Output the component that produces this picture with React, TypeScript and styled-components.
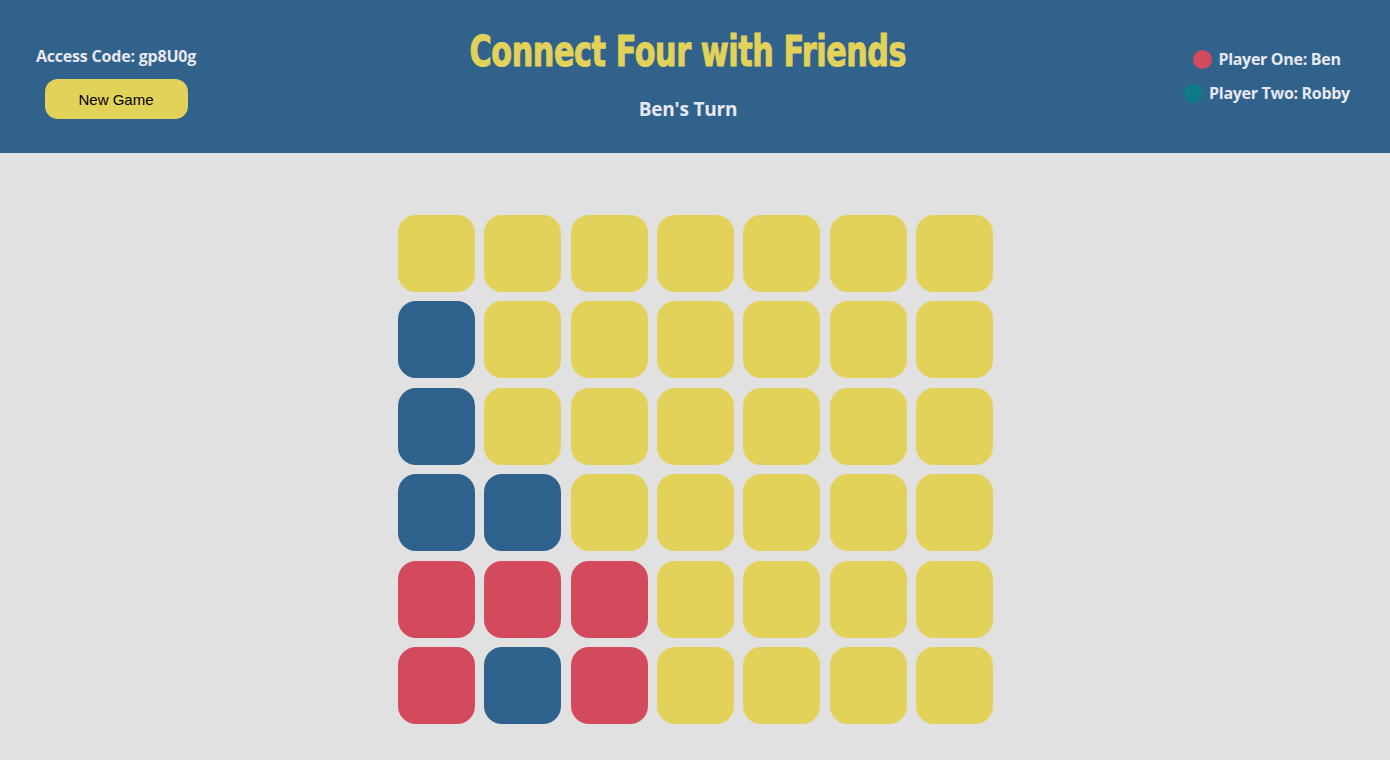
import React from 'react';
import styled, { createGlobalStyle } from 'styled-components';

type Cell = 'Y' | 'B' | 'R';

const board: Cell[][] = [
  ['Y', 'Y', 'Y', 'Y', 'Y', 'Y', 'Y'],
  ['B', 'Y', 'Y', 'Y', 'Y', 'Y', 'Y'],
  ['B', 'Y', 'Y', 'Y', 'Y', 'Y', 'Y'],
  ['B', 'B', 'Y', 'Y', 'Y', 'Y', 'Y'],
  ['R', 'R', 'R', 'Y', 'Y', 'Y', 'Y'],
  ['R', 'B', 'R', 'Y', 'Y', 'Y', 'Y'],
];

const colors = {
  Y: '#e3d259',
  B: '#2e628c',
  R: '#d34a5d',
};

const GlobalStyle = createGlobalStyle`
  html, body {
    margin: 0;
    padding: 0;
    background: #e1e1e1;
  }
  body {
    font-family: 'Open Sans', 'Liberation Sans', sans-serif;
  }
`;

const Page = styled.div`
  min-height: 760px;
  background: #e1e1e1;
`;

const Header = styled.header`
  height: 153px;
  background: #30628c;
  display: grid;
  grid-template-columns: 232px 1fr 246px;
  color: #e8e8f0;
`;

const LeftCol = styled.div`
  display: flex;
  flex-direction: column;
  align-items: center;
  padding-top: 45px;
`;

const AccessCode = styled.div`
  font-size: 16px;
  font-weight: 700;
  letter-spacing: -0.2px;
  line-height: 22px;
`;

const NewGameButton = styled.button`
  margin-top: 12px;
  width: 143px;
  height: 40px;
  border: none;
  border-radius: 13px;
  background: #e3d259;
  color: #000;
  font-family: 'Liberation Sans', Arial, sans-serif;
  font-size: 15px;
  padding: 0;
  cursor: pointer;
`;

const CenterCol = styled.div`
  display: flex;
  flex-direction: column;
  align-items: center;
  padding-top: 28px;
`;

const Title = styled.h1`
  margin: 0;
  color: #e3d259;
  font-family: 'DejaVu Sans Condensed', 'DejaVu Sans', sans-serif;
  font-weight: 700;
  font-size: 42px;
  line-height: 48px;
  letter-spacing: -0.5px;
  white-space: nowrap;
  -webkit-text-stroke: 1px #e3d259;
  transform: scaleX(0.8);
`;

const Turn = styled.div`
  margin-top: 21px;
  font-size: 19px;
  font-weight: 700;
  letter-spacing: -0.2px;
  line-height: 24px;
`;

const RightCol = styled.div`
  display: flex;
  flex-direction: column;
  align-items: center;
  padding-top: 49px;
  gap: 14px;
`;

const PlayerRow = styled.div`
  display: flex;
  align-items: center;
  gap: 6px;
  font-size: 16px;
  font-weight: 700;
  letter-spacing: -0.3px;
  line-height: 20px;
`;

const Dot = styled.span<{ $color: string }>`
  width: 19px;
  height: 19px;
  border-radius: 50%;
  background: ${({ $color }) => $color};
`;

const Main = styled.main`
  display: flex;
  justify-content: center;
  padding-top: 62px;
`;

const Board = styled.div`
  display: grid;
  grid-template-columns: repeat(7, 77px);
  grid-auto-rows: 77px;
  column-gap: 9.33px;
  row-gap: 9.4px;
  margin-left: 1px;
`;

const Slot = styled.div<{ $color: string }>`
  border-radius: 18px;
  background: ${({ $color }) => $color};
`;

export default function App() {
  return (
    <Page>
      <GlobalStyle />
      <Header>
        <LeftCol>
          <AccessCode>Access Code: gp8U0g</AccessCode>
          <NewGameButton>New Game</NewGameButton>
        </LeftCol>
        <CenterCol>
          <Title>Connect Four with Friends</Title>
          <Turn>Ben's Turn</Turn>
        </CenterCol>
        <RightCol>
          <PlayerRow>
            <Dot $color="#d34a5d" />
            Player One: Ben
          </PlayerRow>
          <PlayerRow>
            <Dot $color="#0e7a86" />
            Player Two: Robby
          </PlayerRow>
        </RightCol>
      </Header>
      <Main>
        <Board>
          {board.flatMap((row, r) =>
            row.map((cell, c) => <Slot key={`${r}-${c}`} $color={colors[cell]} />)
          )}
        </Board>
      </Main>
    </Page>
  );
}
